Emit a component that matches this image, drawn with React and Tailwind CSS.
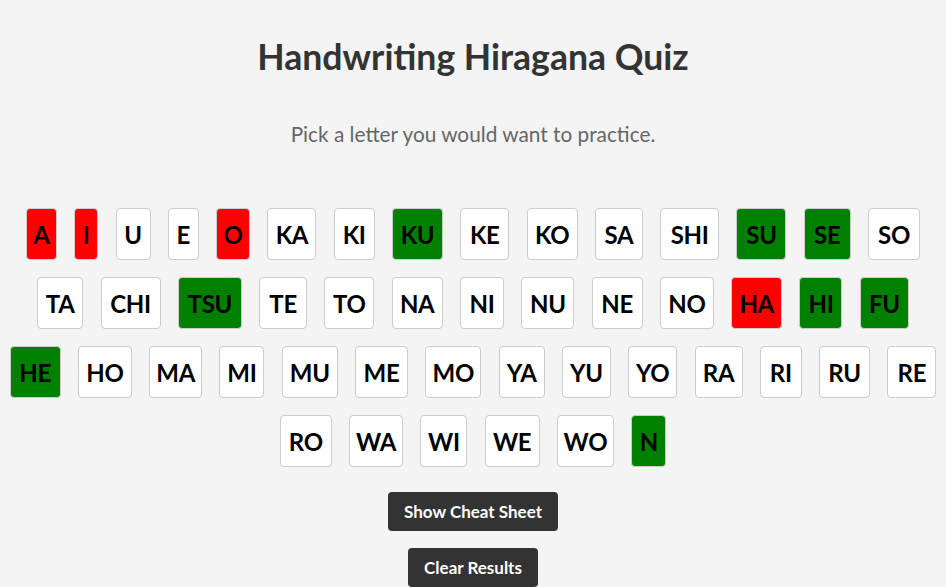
import React from "react";

// result: "wrong" = red, "right" = green, null = not tried
const rows = [
  [
    { label: "A", w: "w-[31px]", result: "wrong" },
    { label: "I", w: "w-[24px]", result: "wrong" },
    { label: "U", w: "w-[35px]", result: null },
    { label: "E", w: "w-[31px]", result: null },
    { label: "O", w: "w-[34px]", result: "wrong" },
    { label: "KA", w: "w-[49px]", result: null },
    { label: "KI", w: "w-[41px]", result: null },
    { label: "KU", w: "w-[51px]", result: "right" },
    { label: "KE", w: "w-[49px]", result: null },
    { label: "KO", w: "w-[51px]", result: null },
    { label: "SA", w: "w-[48px]", result: null },
    { label: "SHI", w: "w-[59px]", result: null },
    { label: "SU", w: "w-[50px]", result: "right" },
    { label: "SE", w: "w-[47px]", result: "right" },
    { label: "SO", w: "w-[52px]", result: null },
  ],
  [
    { label: "TA", w: "w-[46px]", result: null },
    { label: "CHI", w: "w-[60px]", result: null },
    { label: "TSU", w: "w-[64px]", result: "right" },
    { label: "TE", w: "w-[48px]", result: null },
    { label: "TO", w: "w-[50px]", result: null },
    { label: "NA", w: "w-[51px]", result: null },
    { label: "NI", w: "w-[44px]", result: null },
    { label: "NU", w: "w-[53px]", result: null },
    { label: "NE", w: "w-[51px]", result: null },
    { label: "NO", w: "w-[54px]", result: null },
    { label: "HA", w: "w-[51px]", result: "wrong" },
    { label: "HI", w: "w-[43px]", result: "right" },
    { label: "FU", w: "w-[49px]", result: "right" },
  ],
  [
    { label: "HE", w: "w-[51px]", result: "right" },
    { label: "HO", w: "w-[54px]", result: null },
    { label: "MA", w: "w-[53px]", result: null },
    { label: "MI", w: "w-[45px]", result: null },
    { label: "MU", w: "w-[56px]", result: null },
    { label: "ME", w: "w-[53px]", result: null },
    { label: "MO", w: "w-[56px]", result: null },
    { label: "YA", w: "w-[46px]", result: null },
    { label: "YU", w: "w-[49px]", result: null },
    { label: "YO", w: "w-[49px]", result: null },
    { label: "RA", w: "w-[48px]", result: null },
    { label: "RI", w: "w-[42px]", result: null },
    { label: "RU", w: "w-[51px]", result: null },
    { label: "RE", w: "w-[49px]", result: null },
  ],
  [
    { label: "RO", w: "w-[52px]", result: null },
    { label: "WA", w: "w-[54px]", result: null },
    { label: "WI", w: "w-[47px]", result: null },
    { label: "WE", w: "w-[55px]", result: null },
    { label: "WO", w: "w-[57px]", result: null },
    { label: "N", w: "w-[35px]", result: "right" },
  ],
];

const bgFor = (result) =>
  result === "wrong" ? "bg-[#ff0000]" : result === "right" ? "bg-[#008000]" : "bg-white";

function LetterButton({ item }) {
  return (
    <button
      className={`${item.w} ${bgFor(item.result)} h-[52px] shrink-0 flex items-center justify-center rounded-[4px] border border-[#cccccc] pt-[2px] text-[24px] font-bold text-black tracking-[-0.3px]`}
    >
      {item.label}
    </button>
  );
}

export default function App() {
  return (
    <div className="min-h-screen bg-[#f4f4f4] font-['Lato',sans-serif] flex flex-col items-center">
      <h1 className="mt-[35px] text-[35.6px] leading-[44px] font-bold text-[#333333]">
        Handwriting Hiragana Quiz
      </h1>
      <p className="mt-[40px] text-[20.8px] leading-[30px] text-[#666666]">
        Pick a letter you would want to practice.
      </p>

      <div className="mt-[59px] flex flex-col gap-y-[17px] w-full">
        {rows.map((row, i) => (
          <div key={i} className="flex justify-center gap-x-[17.3px]">
            {row.map((item) => (
              <LetterButton key={item.label} item={item} />
            ))}
          </div>
        ))}
      </div>

      <button className="mt-[25px] w-[170px] h-[39px] rounded-[4px] bg-[#333333] text-white text-[17px] font-bold">
        Show Cheat Sheet
      </button>
      <button className="mt-[17px] w-[130px] h-[39px] rounded-[4px] bg-[#333333] text-white text-[17px] font-bold">
        Clear Results
      </button>
    </div>
  );
}
